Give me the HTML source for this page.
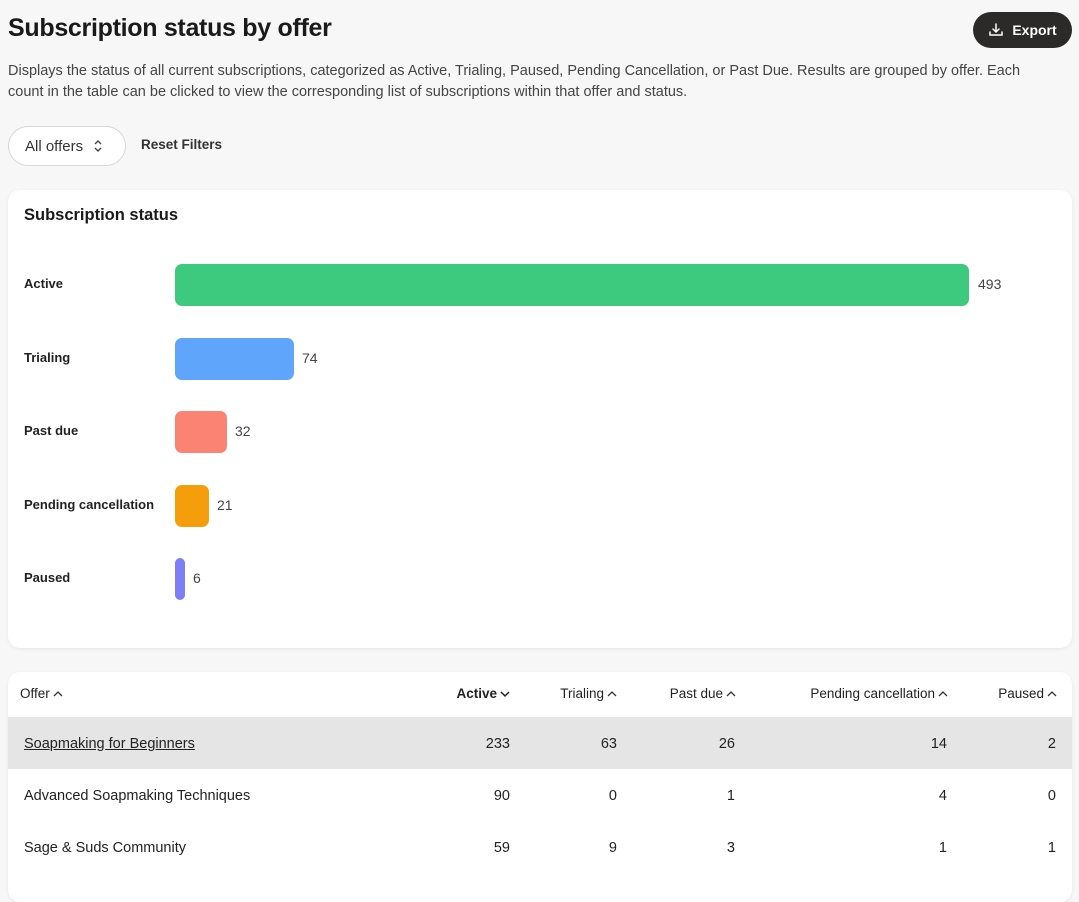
<!DOCTYPE html>
<html><head><style>
*{box-sizing:border-box;margin:0;padding:0}
body{width:1079px;height:884px;overflow:hidden;background:#f7f7f7;font-family:"Liberation Sans",sans-serif;color:#1a1a1a;position:relative}
.abs{position:absolute}
h1{position:absolute;left:8px;top:14px;font-size:25px;font-weight:bold;letter-spacing:-0.3px}
.desc{left:8px;top:61px;width:1048px;font-size:14.5px;line-height:21px;color:#444}
.btn{left:973px;top:12px;width:99px;height:36px;border-radius:18px;background:#2b2a28;color:#fff;font-size:14px;font-weight:bold;display:flex;align-items:center;justify-content:center;gap:8px}
.sel{left:8px;top:126px;width:118px;height:40px;border:1px solid #d8d8d8;border-radius:20px;background:#fff;font-size:15px;display:flex;align-items:center;padding-left:16px;gap:10px;color:#333}
.card{background:#fff;border-radius:12px;box-shadow:0 1px 3px rgba(0,0,0,.08)}
.lbl{left:24px;font-size:13px;font-weight:bold;color:#222}
.bar{left:175px;height:42px;border-radius:7px}
.val{font-size:14px;color:#444}
.th{top:686px;font-size:13.5px;color:#222;display:flex;align-items:center;gap:3px}
.td{font-size:14.5px;color:#222}
</style></head><body>
<h1>Subscription status by offer</h1>
<div class="abs btn"><svg width="16" height="16" viewBox="0 0 16 16" fill="none" stroke="#fff" stroke-width="1.5" stroke-linecap="round"><path d="M8 2v8M5 7l3 3 3-3M2 10v3h12v-3"/></svg>Export</div>
<div class="abs desc">Displays the status of all current subscriptions, categorized as Active, Trialing, Paused, Pending Cancellation, or Past Due. Results are grouped by offer. Each count in the table can be clicked to view the corresponding list of subscriptions within that offer and status.</div>
<div class="abs sel">All offers <svg width="10" height="14" viewBox="0 0 10 14" fill="none" stroke="#444" stroke-width="1.4"><path d="M2 5l3-3 3 3M2 9l3 3 3-3"/></svg></div>
<div class="abs" style="left:141px;top:137px;font-size:13.5px;font-weight:bold;color:#333">Reset Filters</div>

<div class="abs card" style="left:8px;top:190px;width:1064px;height:458px"></div>
<div class="abs" style="left:24px;top:206px;font-size:16.5px;font-weight:bold">Subscription status</div>
<div class="abs lbl" style="top:276px">Active</div>
<div class="abs bar" style="top:264px;width:794px;background:#3dca7e"></div>
<div class="abs val" style="left:978px;top:276px">493</div>
<div class="abs lbl" style="top:350px">Trialing</div>
<div class="abs bar" style="top:338px;width:119px;background:#5ea5fb"></div>
<div class="abs val" style="left:302px;top:350px">74</div>
<div class="abs lbl" style="top:423px">Past due</div>
<div class="abs bar" style="top:411px;width:52px;background:#fb8374"></div>
<div class="abs val" style="left:235px;top:423px">32</div>
<div class="abs lbl" style="top:497px">Pending cancellation</div>
<div class="abs bar" style="top:485px;width:34px;background:#f59e0b"></div>
<div class="abs val" style="left:217px;top:497px">21</div>
<div class="abs lbl" style="top:570px">Paused</div>
<div class="abs bar" style="top:558px;width:10px;background:#7d7ff7;border-radius:5px"></div>
<div class="abs val" style="left:193px;top:570px">6</div>

<div class="abs card" style="left:8px;top:672px;width:1064px;height:230px;overflow:hidden">
<div class="abs" style="left:0;top:45px;width:1064px;height:52px;background:#e5e5e5"></div>
</div>
<div class="abs th" style="left:20px">Offer <svg width="10" height="8" viewBox="0 0 10 8" fill="none" stroke="#333" stroke-width="1.3"><path d="M1 6l4-4 4 4"/></svg></div>
<div class="abs th" style="right:569px;font-weight:bold">Active <svg width="10" height="8" viewBox="0 0 10 8" fill="none" stroke="#222" stroke-width="1.5"><path d="M1 2l4 4 4-4"/></svg></div>
<div class="abs th" style="right:462px">Trialing <svg width="10" height="8" viewBox="0 0 10 8" fill="none" stroke="#333" stroke-width="1.3"><path d="M1 6l4-4 4 4"/></svg></div>
<div class="abs th" style="right:343px">Past due <svg width="10" height="8" viewBox="0 0 10 8" fill="none" stroke="#333" stroke-width="1.3"><path d="M1 6l4-4 4 4"/></svg></div>
<div class="abs th" style="right:131px">Pending cancellation <svg width="10" height="8" viewBox="0 0 10 8" fill="none" stroke="#333" stroke-width="1.3"><path d="M1 6l4-4 4 4"/></svg></div>
<div class="abs th" style="right:22px">Paused <svg width="10" height="8" viewBox="0 0 10 8" fill="none" stroke="#333" stroke-width="1.3"><path d="M1 6l4-4 4 4"/></svg></div>

<div class="abs td" style="left:24px;top:736px;text-decoration:underline">Soapmaking for Beginners</div>
<div class="abs td" style="right:569px;top:736px">233</div><div class="abs td" style="right:462px;top:736px">63</div><div class="abs td" style="right:344px;top:736px">26</div><div class="abs td" style="right:132px;top:736px">14</div><div class="abs td" style="right:23px;top:736px">2</div>
<div class="abs td" style="left:24px;top:788px">Advanced Soapmaking Techniques</div>
<div class="abs td" style="right:569px;top:788px">90</div><div class="abs td" style="right:462px;top:788px">0</div><div class="abs td" style="right:344px;top:788px">1</div><div class="abs td" style="right:132px;top:788px">4</div><div class="abs td" style="right:23px;top:788px">0</div>
<div class="abs td" style="left:24px;top:840px">Sage &amp; Suds Community</div>
<div class="abs td" style="right:569px;top:840px">59</div><div class="abs td" style="right:462px;top:840px">9</div><div class="abs td" style="right:344px;top:840px">3</div><div class="abs td" style="right:132px;top:840px">1</div><div class="abs td" style="right:23px;top:840px">1</div>
</body></html>
